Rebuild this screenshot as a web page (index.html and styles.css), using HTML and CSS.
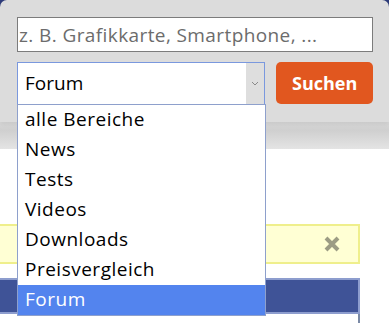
FILE: index.html
```html
<!DOCTYPE html>
<html lang="de">
<head>
    <meta charset="UTF-8">
    <meta name="viewport" content="width=device-width, initial-scale=1.0">
    <title>Suche</title>
    <link rel="stylesheet" href="styles.css">
</head>
<body>
    <div class="page-top">
        <form class="search-panel">
            <input class="search-input" type="text" placeholder="z. B. Grafikkarte, Smartphone, ...">
            <div class="search-row">
                <div class="select-wrap">
                    <div class="select-box">
                        <span class="select-value">Forum</span>
                        <span class="select-arrow">
                            <svg width="8" height="5" viewBox="0 0 8 5"><path d="M1 1 L4 4 L7 1" fill="none" stroke="#8a8a8a" stroke-width="1"/></svg>
                        </span>
                    </div>
                    <ul class="select-list">
                        <li>alle Bereiche</li>
                        <li>News</li>
                        <li>Tests</li>
                        <li>Videos</li>
                        <li>Downloads</li>
                        <li>Preisvergleich</li>
                        <li class="selected">Forum</li>
                    </ul>
                </div>
                <button class="search-btn" type="button">Suchen</button>
            </div>
        </form>
    </div>
    <div class="nav-shade"></div>

    <div class="content">
        <div class="notice">
            <span class="notice-close">
                <svg width="18" height="16" viewBox="0 0 18 16"><path d="M3 2 L15 14 M15 2 L3 14" stroke="#9c9c84" stroke-width="4"/></svg>
            </span>
        </div>
        <div class="table-head"></div>
        <div class="table-body"></div>
    </div>
</body>
</html>
```
FILE: styles.css
```css
* {
    margin: 0;
    padding: 0;
    box-sizing: border-box;
}

body {
    background-color: #fff;
    font-family: "Open Sans", "Noto Sans", sans-serif;
    color: #111;
}

.page-top {
    background-color: #2e3c7a;
}

.search-panel {
    background-color: #dcdcdc;
    border-radius: 7px 7px 0 0;
    padding: 17px 16px 17px 17px;
    box-shadow: 0 2px 4px rgba(0, 0, 0, 0.08);
    position: relative;
    z-index: 2;
}

.search-input {
    display: block;
    width: 356px;
    height: 35px;
    border: 1px solid #7c7c7c;
    background: #fff;
    padding: 0 1px;
    font-family: inherit;
    font-size: 19px;
    letter-spacing: 0.4px;
    color: #333;
    outline: none;
}

.search-input::placeholder {
    color: #6c6c6c;
}

.search-row {
    display: flex;
    margin-top: 10px;
    gap: 11px;
}

.select-wrap {
    position: relative;
    width: 249px;
}

.select-box {
    display: flex;
    height: 43px;
    border: 1px solid #7a98de;
    background: #fff;
}

.select-value {
    flex: 1;
    padding-left: 7px;
    font-size: 19px;
    line-height: 41px;
    color: #000;
}

.select-arrow {
    width: 18px;
    background: #dedede;
    display: flex;
    align-items: center;
    justify-content: center;
}

.select-list {
    list-style: none;
    position: absolute;
    top: 42px;
    left: 0;
    width: 249px;
    background: #fff;
    border: 1px solid #8ea0cc;
    z-index: 10;
}

.select-list li {
    height: 30px;
    line-height: 29px;
    padding-left: 7px;
    font-size: 19px;
    letter-spacing: 0.5px;
    color: #000;
}

.select-list li.selected {
    background-color: #5384ee;
    color: #fff;
}

.search-btn {
    width: 97px;
    height: 42px;
    border: none;
    border-radius: 5px;
    background-color: #e1571f;
    color: #fff;
    font-family: inherit;
    font-weight: bold;
    font-size: 18px;
}

.nav-shade {
    height: 27px;
    background: linear-gradient(#d9d9d9, #cfcfcf 30%, #e4e4e4);
}

.content {
    padding-top: 75px;
}

.notice {
    width: 360px;
    height: 40px;
    background-color: #ffffd4;
    border: 2px solid #efef8c;
    border-left: none;
    display: flex;
    align-items: center;
    justify-content: flex-end;
    padding-right: 17px;
}

.notice-close {
    display: flex;
}

.table-head {
    width: 360px;
    height: 36px;
    margin-top: 14px;
    background-color: #3f5397;
    border: 2px solid #8d9dce;
    border-left: none;
}

.table-body {
    width: 360px;
    height: 20px;
    border-right: 2px solid #7b8aa6;
}
```
